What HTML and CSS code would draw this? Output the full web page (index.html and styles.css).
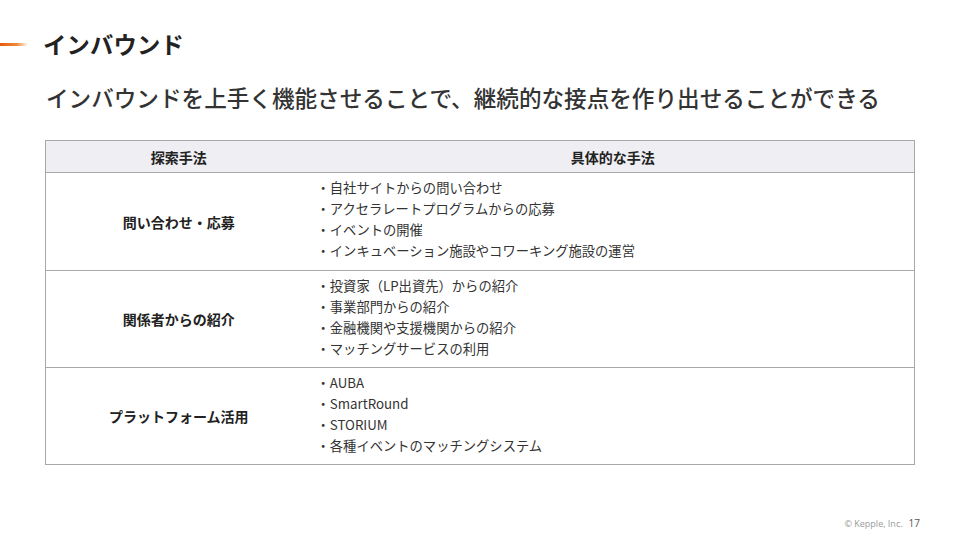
FILE: index.html
```html
<!DOCTYPE html>
<html lang="ja">
<head>
<meta charset="utf-8">
<link rel="stylesheet" href="styles.css">
</head>
<body>
<div class="slide">
  <header class="head">
    <span class="accent"></span>
    <h1 class="title">インバウンド</h1>
  </header>
  <p class="lead">インバウンドを上手く機能させることで、継続的な接点を作り出せることができる</p>
  <table class="tbl">
    <thead>
      <tr><th class="c1">探索手法</th><th class="c2">具体的な手法</th></tr>
    </thead>
    <tbody>
      <tr>
        <td class="label">問い合わせ・応募</td>
        <td class="items">
          <div>・自社サイトからの問い合わせ</div>
          <div>・アクセラレートプログラムからの応募</div>
          <div>・イベントの開催</div>
          <div>・インキュベーション施設やコワーキング施設の運営</div>
        </td>
      </tr>
      <tr>
        <td class="label">関係者からの紹介</td>
        <td class="items">
          <div>・投資家（LP出資先）からの紹介</div>
          <div>・事業部門からの紹介</div>
          <div>・金融機関や支援機関からの紹介</div>
          <div>・マッチングサービスの利用</div>
        </td>
      </tr>
      <tr>
        <td class="label">プラットフォーム活用</td>
        <td class="items">
          <div>・AUBA</div>
          <div>・SmartRound</div>
          <div>・STORIUM</div>
          <div>・各種イベントのマッチングシステム</div>
        </td>
      </tr>
    </tbody>
  </table>
  <footer class="foot"><span class="copy">© Kepple, Inc.</span><span class="page">17</span></footer>
</div>
</body>
</html>
```
FILE: styles.css
```css
* { box-sizing: border-box; }
html, body { margin: 0; padding: 0; background: #fff; }
body { font-family: "Noto Sans CJK JP", "Noto Sans", sans-serif; color: #222; }
.slide { width: 960px; height: 540px; position: relative; overflow: hidden; }
.head { display: flex; align-items: center; height: 32px; margin-top: 28px; }
.accent { width: 28px; height: 3px; background: linear-gradient(90deg, #e8590c 0%, #f08a3c 60%, rgba(255,255,255,0) 100%); margin-right: 15px; }
.title { margin: 0; font-size: 23.3px; font-weight: 700; color: #222; line-height: 32px; letter-spacing: 0.2px; }
.lead { margin: 22px 0 0 46px; font-size: 22.6px; font-weight: 500; color: #333; line-height: 32px; }
.tbl { margin: 26px 0 0 45px; width: 870px; border-collapse: collapse; border: 1px solid #a8a8a8; }
.tbl th { background: #eeeef3; font-size: 14px; font-weight: 700; height: 32px; padding: 0; border-bottom: 1px solid #a8a8a8; color: #222; }
.c1 { width: 266px; }
.tbl td { border-bottom: 1px solid #a8a8a8; padding: 0; height: 97px; vertical-align: middle; }
.tbl tbody tr:first-child td { height: 98px; }
.label { text-align: center; font-size: 14px; font-weight: 700; color: #222; }
.items { font-size: 13.3px; line-height: 21px; color: #333; padding: 0 0 5px 5px !important; }
.foot { position: absolute; right: 40px; bottom: 10px; display: flex; align-items: baseline; gap: 6px; font-family: "Open Sans", sans-serif; }
.copy { font-size: 9px; color: #999; }
.page { font-size: 10px; color: #555; }
```
